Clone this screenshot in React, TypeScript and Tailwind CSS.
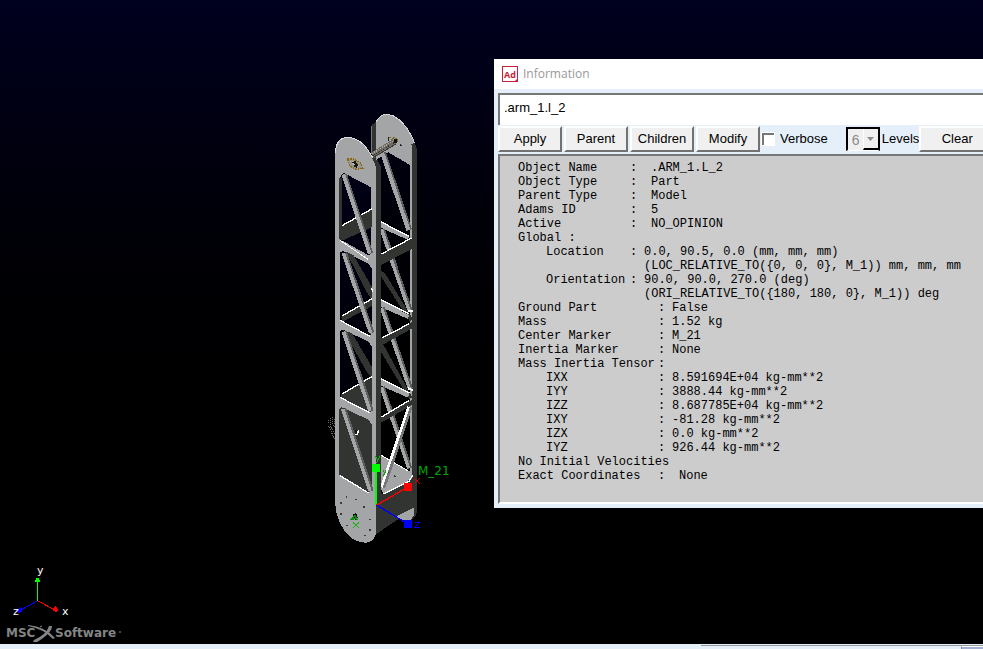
import React from "react";

const LIGHT = "#a3a5a6";
const DARK = "#323432";
const VOID = "url(#void)";
const EDGE = "#ffffff";
const SHADE = "#5c5d5c";

type Layout = "near" | "far";

type Entry = {
  label: string;
  value?: string;
  layout?: Layout;
  indent?: boolean;
  spaced?: boolean;
};

const report: Entry[] = [
  { label: "Object Name", value: ".ARM_1.L_2", layout: "near", spaced: true },
  { label: "Object Type", value: "Part", layout: "near", spaced: true },
  { label: "Parent Type", value: "Model", layout: "near", spaced: true },
  { label: "Adams ID", value: "5", layout: "near", spaced: true },
  { label: "Active", value: "NO_OPINION", layout: "near", spaced: true },
  { label: "Global :" },
  { label: "Location", value: "0.0, 90.5, 0.0 (mm, mm, mm)", layout: "near", indent: true },
  { label: "", value: "(LOC_RELATIVE_TO({0, 0, 0}, M_1)) mm, mm, mm", layout: "near" },
  { label: "Orientation", value: "90.0, 90.0, 270.0 (deg)", layout: "near", indent: true },
  { label: "", value: "(ORI_RELATIVE_TO({180, 180, 0}, M_1)) deg", layout: "near" },
  { label: "Ground Part", value: "False", layout: "far" },
  { label: "Mass", value: "1.52 kg", layout: "far" },
  { label: "Center Marker", value: "M_21", layout: "far" },
  { label: "Inertia Marker", value: "None", layout: "far" },
  { label: "Mass Inertia Tensor", value: "", layout: "far" },
  { label: "IXX", value: "8.591694E+04 kg-mm**2", layout: "far", indent: true },
  { label: "IYY", value: "3888.44 kg-mm**2", layout: "far", indent: true },
  { label: "IZZ", value: "8.687785E+04 kg-mm**2", layout: "far", indent: true },
  { label: "IXY", value: "-81.28 kg-mm**2", layout: "far", indent: true },
  { label: "IZX", value: "0.0 kg-mm**2", layout: "far", indent: true },
  { label: "IYZ", value: "926.44 kg-mm**2", layout: "far", indent: true },
  { label: "No Initial Velocities" },
  { label: "Exact Coordinates", value: "None", layout: "far", spaced: true },
];

function ReportRow({ label, value, layout, indent, spaced }: Entry) {
  if (!layout) {
    return (
      <div className="whitespace-pre">
        <dt>{label}</dt>
      </div>
    );
  }
  return (
    <div className="flex whitespace-pre">
      <dt className={`shrink-0 ${layout === "near" ? "w-[112px]" : "w-[140px]"} ${indent ? "pl-7" : ""}`}>{label}</dt>
      <dd className="flex">
        <span className={`shrink-0 ${spaced ? "w-[21px]" : "w-[14px]"}`}>{label ? ":" : ""}</span>
        <span>{value}</span>
      </dd>
    </div>
  );
}

type Seg = [number, number, number, number];

function Strut({ at, w = 12, fill = LIGHT, shade = SHADE }: { at: Seg; w?: number; fill?: string; shade?: string }) {
  const [x1, y1, x2, y2] = at;
  return (
    <g>
      <line x1={x1 + 4} y1={y1} x2={x2 + 4} y2={y2} stroke={shade} strokeWidth={w} />
      <line x1={x1} y1={y1} x2={x2} y2={y2} stroke={fill} strokeWidth={w - 3} />
    </g>
  );
}

function Rim({ at, w = 4 }: { at: Seg; w?: number }) {
  return <line x1={at[0]} y1={at[1]} x2={at[2]} y2={at[3]} stroke={EDGE} strokeWidth={w} />;
}

const boltHoles = [
  [80, 1176], [109, 1183], [64, 1194], [133, 1206], [64, 1227], [151, 1243],
  [82, 1261], [151, 1274], [136, 1291],
];

function ArmModel() {
  return (
    <svg
      className="absolute left-[320px] top-[105px] h-[450px] w-[140px]"
      viewBox="0 0 420 1350"
      shapeRendering="crispEdges"
      role="img"
      aria-label="Truss arm model"
    >
      <defs>
        <linearGradient id="void" gradientUnits="userSpaceOnUse" x1="0" y1="0" x2="0" y2="1230">
          <stop offset="0" stopColor="#000019" />
          <stop offset="1" stopColor="#000000" />
        </linearGradient>
      </defs>

      <path
        d="M24 944 L24 958 L40 995 L44 1005 M30 938 L32 962 L44 988 M36 936 L38 958 L46 970 M42 942 L44 958"
        fill="none"
        stroke="#6d6a64"
        strokeWidth="3"
        strokeDasharray="3 3"
      />

      {/* rear side plate */}
      <path d="M155 60 L168 50 L168 180 L155 160 Z" fill={DARK} />
      <path d="M155 62 L155 146" stroke="#77797a" strokeWidth="3" />
      <path d="M168 52 Q180 26 205 28 Q236 34 262 72 Q278 94 285 118 L277 122 L270 180 L205 142 L168 165 Z" fill={LIGHT} />
      <path d="M168 52 Q180 26 205 28 Q236 34 262 72 Q278 94 285 118" fill="none" stroke="#d6d7d7" strokeWidth="3" />
      <rect x="270" y="120" width="8" height="1000" fill={LIGHT} />
      <path d="M272 118 L284 114 L290 130 L290 1220 L277 1240 L277 124 Z" fill={DARK} />

      <Strut at={[186, 142, 265, 375]} w={15} />
      <Strut at={[184, 372, 224, 490]} w={13} />
      <path d="M182 352 L270 396 L262 404 L182 368 Z" fill={LIGHT} />
      <Rim at={[182, 350, 268, 395]} />
      <path d="M182 448 L277 398 L277 432 L182 480 Z" fill={DARK} />
      <Rim at={[184, 447, 275, 399]} />

      <Strut at={[214, 465, 268, 618]} w={13} />
      <path d="M180 495 L195 505 L277 640 L270 650 L180 510 Z" fill={DARK} />
      <path d="M182 586 L268 630 L264 642 L182 606 Z" fill={LIGHT} />
      <Rim at={[182, 584, 268, 626]} />
      <Rim at={[264, 618, 278, 618]} w={6} />
      <Strut at={[184, 608, 268, 850]} w={13} />
      <path d="M180 700 L277 650 L277 670 L190 718 L277 878 L268 882 L180 735 Z" fill={DARK} />
      <Rim at={[186, 699, 268, 656]} />
      <path d="M182 822 L268 866 L264 878 L182 842 Z" fill={LIGHT} />
      <Rim at={[182, 820, 268, 864]} />
      <Rim at={[264, 850, 278, 856]} w={6} />
      <Strut at={[184, 846, 266, 1090]} w={13} />
      <path d="M180 938 L277 884 L277 900 L180 955 Z" fill={DARK} />
      <Rim at={[185, 936, 268, 886]} />

      {/* base block */}
      <path d="M182 1050 L265 1098 L277 1100 L277 1122 L190 1167 L182 1150 Z" fill={LIGHT} />
      <Rim at={[182, 1050, 265, 1098]} w={3} />
      <line x1="272" y1="905" x2="190" y2="1148" stroke="#777978" strokeWidth="12" />
      <Rim at={[266, 905, 184, 1147]} w={8} />
      <path d="M168 1150 L190 1168 L277 1120 L290 1080 L290 1212 L245 1235 L168 1288 Z" fill={DARK} />
      <path d="M190 1167 L268 1128 L278 1110" fill="none" stroke={EDGE} strokeWidth="4" />
      <path d="M228 1235 L282 1208 L282 1230 Q278 1248 262 1250 Z" fill={LIGHT} />
      <path d="M282 1208 L290 1200 L290 1222 Q286 1240 270 1248 L282 1230 Z" fill={DARK} />
      <circle cx="224" cy="1114" r="3" fill={DARK} />
      <circle cx="206" cy="1102" r="2" fill={DARK} />

      {/* front side plate */}
      <path d="M155 160 L172 165 L182 185 L182 1270 L168 1288 L155 1200 Z" fill={DARK} />
      <path d="M46 145 Q48 98 82 97 Q125 100 150 145 L168 185 L168 1285 Q160 1313 138 1313 Q94 1313 66 1265 Q46 1230 46 1190 Z" fill={LIGHT} />
      <path d="M46 145 Q48 98 82 97 Q125 100 150 145 L160 160" fill="none" stroke="#dcdddd" strokeWidth="3" />

      <path d="M70 203 L153 247 L153 440 L148 452 L62 404 L58 220 Z" fill={VOID} />
      <path d="M58 220 L66 220 L66 408 L58 403 Z" fill={DARK} />
      <path d="M64 364 L157 312 L157 366 L64 408 Z" fill={DARK} />
      <Rim at={[66, 362, 157, 311]} />
      <Strut at={[70, 208, 149, 446]} w={14} />
      <Rim at={[60, 406, 144, 463]} w={3} />

      <path d="M70 438 L145 476 L157 494 L157 680 L150 692 L60 646 L60 442 Z" fill={VOID} />
      <path d="M78 440 L100 450 L157 548 L157 585 L140 562 Z" fill={DARK} />
      <path d="M64 636 L157 582 L157 603 L66 651 Z" fill={DARK} />
      <Rim at={[66, 633, 157, 581]} />
      <Rim at={[154, 548, 158, 560]} />
      <Strut at={[70, 444, 152, 684]} w={14} />
      <Rim at={[60, 646, 150, 694]} />

      <path d="M70 674 L145 710 L157 726 L157 910 L150 924 L60 876 L60 678 Z" fill={VOID} />
      <path d="M70 676 L96 684 L157 788 L157 822 L140 800 Z" fill={DARK} />
      <path d="M62 868 L157 815 L157 918 L148 922 L62 876 Z" fill={DARK} />
      <Rim at={[66, 867, 155, 815]} />
      <Strut at={[70, 680, 150, 918]} w={14} />
      <Rim at={[60, 877, 150, 924]} />

      <path d="M64 906 L145 944 L157 962 L157 1140 L148 1163 L58 1110 L58 912 Z" fill={DARK} />
      <Strut at={[68, 912, 150, 1158]} w={14} />
      <Rim at={[60, 1112, 146, 1164]} />
      <path d="M106 988 L112 988 L116 974" fill="none" stroke={EDGE} strokeWidth="5" />
      <rect x="105" y="975" width="7" height="8" fill="#111" />

      {/* pin joint */}
      <path d="M155 142 L218 103 L230 117 L160 160 Z" fill="#6f6c66" />
      <path d="M156 146 L218 108" stroke="#aaa59b" strokeWidth="4" strokeDasharray="4 3" />
      <path d="M158 152 L224 112" stroke="#2f2d2a" strokeWidth="3" strokeDasharray="3 3" />
      <path d="M160 157 L228 117" stroke="#3b3935" strokeWidth="3" />
      <path d="M204 97 L212 96 M214 104 L222 98 L230 100 L234 110" fill="none" stroke="#80682a" strokeWidth="3" strokeDasharray="5 2" />
      <path d="M220 101 L230 103 L232 113 L224 116 Z" fill="#131312" />
      <path d="M240 118 L246 123 M204 98 L207 106" stroke="#222" strokeWidth="4" />

      <path d="M82 162 L102 162 L122 174 L129 190 L108 193 L90 184 Z" fill="#979691" />
      <path d="M82 162 L102 162 L122 174 L129 190 L108 193 L90 184 Z" fill="none" stroke="#8a6a10" strokeWidth="4" strokeDasharray="5 3" />
      <path d="M90 168 L100 168 L118 184" fill="none" stroke="#d8bf62" strokeWidth="3" strokeDasharray="3 4" />
      <path d="M96 172 L106 168 L114 180 L110 188 L102 184 Z" fill="#161613" />
      <path d="M98 174 L104 181" stroke="#b8b8b5" strokeWidth="3" />

      {boltHoles.map(([x, y], i) => (
        <path key={i} d={`M${x - 3} ${y - 2}h5v5h-5z`} fill="#3a3b3a" />
      ))}
      <path d="M98 1228 L108 1225 L113 1236 L110 1246 L100 1242 Z" fill="#101010" />
      <path d="M90 1245 L105 1232 L112 1245 M90 1243 L112 1240" stroke="#0a8f0a" strokeWidth="4" fill="none" />
      <path d="M100 1253 L116 1268 M116 1253 L100 1268" stroke="#12b512" strokeWidth="3" />

      {/* marker triad */}
      <line x1="168" y1="1085" x2="168" y2="1200" stroke="#00ff00" strokeWidth="4" />
      <line x1="170" y1="1200" x2="262" y2="1147" stroke="#ff0000" strokeWidth="4" />
      <line x1="170" y1="1200" x2="262" y2="1256" stroke="#0000ff" strokeWidth="4" />
      <rect x="156" y="1077" width="24" height="24" fill="#00ff00" />
      <rect x="252" y="1134" width="24" height="24" fill="#ff0000" />
      <rect x="252" y="1245" width="24" height="24" fill="#0000ff" />
      <path d="M284 1120 L298 1136 M298 1120 L284 1136" stroke="#d00000" strokeWidth="3" />
      <path d="M285 1253 L298 1253 L286 1266 L299 1266" stroke="#0000ff" strokeWidth="3" fill="none" />
      <path d="M166 1054 L173 1066 M180 1054 L170 1074" stroke="#12b512" strokeWidth="3" />
      <path d="M188 1094 L193 1104 M199 1094 L190 1113" stroke="#12a012" strokeWidth="3" />
      <text x="294" y="1110" fontSize="36" fill="#00a800" className="font-['DejaVu_Sans',sans-serif]">
        M_21
      </text>
    </svg>
  );
}

function ViewTriad() {
  return (
    <svg className="absolute bottom-[26px] left-[8px] h-[56px] w-[64px]" viewBox="0 0 64 56" role="img" aria-label="View axes">
      <g shapeRendering="crispEdges">
        <path d="M29 39V19" stroke="#00ff00" strokeWidth="1" transform="translate(0.5 0)" />
        <path d="M27 20h5v-2h-1v-2h-3v2h-1z" fill="#00ff00" />
        <path d="M30 39L47 48" stroke="#ff0000" strokeWidth="1" />
        <path d="M45 46l3-2 2 4-1 2-4-1z" fill="#ff0000" />
        <path d="M29 39L13 48" stroke="#0000ff" strokeWidth="1" />
        <path d="M9 49l3-4 3 2-1 3-4 1z" fill="#0000ff" />
      </g>
      <g fill="#ffffff" fontSize="11" className="font-['DejaVu_Sans',sans-serif]">
        <text x="29" y="12">y</text>
        <text x="54" y="53">x</text>
        <text x="5" y="53">z</text>
      </g>
    </svg>
  );
}

function VendorLogo() {
  return (
    <svg className="absolute bottom-0 left-[6px] h-[20px] w-[118px]" viewBox="0 0 118 20" role="img" aria-label="MSC Software">
      <g fill="#858585" fontSize="12" fontWeight="700" className="font-['DejaVu_Sans',sans-serif]">
        <text x="0" y="13">MSC</text>
        <text x="49" y="13">Software</text>
      </g>
      <path d="M22 1 Q40 3 49 14 L47 15 Q38 5 22 2 Z" fill="#858585" />
      <path d="M43 2 L46 2 Q46 9 31 18 L27 18 L28 16 Q41 10 43 2 Z" fill="#858585" />
      <path d="M34 3l2-1M113 8h2" stroke="#858585" />
    </svg>
  );
}

function PushButton({ children, wide = false }: { children: React.ReactNode; wide?: boolean }) {
  return (
    <button
      type="button"
      className={`h-[26px] shrink-0 border-2 border-t-white border-l-white border-r-[#727272] border-b-[#727272] bg-[#f0f0f0] text-center leading-[22px] ${
        wide ? "-ml-[2px] w-[76px]" : "w-[64px]"
      }`}
    >
      {children}
    </button>
  );
}

function InformationWindow() {
  return (
    <section
      aria-label="Information"
      className="absolute left-[494px] right-0 top-[59px] overflow-hidden bg-[#e5eff9] pb-1 font-['Liberation_Sans',Arial,sans-serif] text-[13px] text-black"
    >
      <header className="flex h-[30px] items-center gap-[5px] bg-white pl-2">
        <svg className="h-4 w-4" viewBox="0 0 16 16" aria-hidden="true">
          <rect x="0.5" y="0.5" width="15" height="15" fill="#fff" stroke="#c8203c" />
          <path d="M13 15l2-2v2z" fill="#c8203c" />
          <text x="2" y="12" fontSize="9" fontWeight="700" fill="#c8203c" className="font-['Open_Sans',sans-serif]">
            Ad
          </text>
        </svg>
        <h1 className="font-['Open_Sans',sans-serif] text-[12px] leading-4 text-[#999999]">Information</h1>
      </header>

      <div className="pl-1 pt-1">
        <input
          aria-label="Object name"
          defaultValue=".arm_1.l_2"
          className="block h-[32px] w-full border-l-2 border-t-2 border-[#777777] bg-white pb-[6px] pl-1 outline-none"
        />
        <div className="flex items-center gap-[2px] overflow-hidden pb-[2px] pt-px">
          <PushButton>Apply</PushButton>
          <PushButton>Parent</PushButton>
          <PushButton>Children</PushButton>
          <PushButton>Modify</PushButton>
          <label className="flex shrink-0 items-center gap-[6px]">
            <input
              type="checkbox"
              className="h-3 w-3 appearance-none border-l-2 border-t-2 border-[#777777] bg-white outline outline-1 outline-white"
            />
            Verbose
          </label>
          <div className="ml-4 flex shrink-0 items-center">
            <div className="relative h-6 w-[34px] border-l-2 border-t-2 border-b border-r-2 border-black border-b-white bg-[#f0f0f0]">
              <select
                id="levels"
                disabled
                defaultValue="6"
                className="h-full w-full appearance-none bg-transparent pl-1 text-[14px] leading-5 text-[#8a8a8a] opacity-100"
              >
                <option>6</option>
              </select>
              <span className="pointer-events-none absolute inset-y-0 right-0 flex w-[15px] items-center justify-center border-b-2 border-l border-b-black border-l-white bg-[#f0f0f0]">
                <svg className="h-1 w-[7px]" viewBox="0 0 7 4" aria-hidden="true">
                  <path d="M0 0h7L3.500 4z" fill="#8c8c8c" />
                </svg>
              </span>
            </div>
            <label htmlFor="levels" className="pl-[2px]">
              Levels
            </label>
          </div>
          <PushButton wide>Clear</PushButton>
        </div>
        <dl className="overflow-hidden border-b-2 border-l-2 border-t-2 border-[#777777] border-b-white bg-[#cccccc] pb-[19px] pl-[18px] pt-[5px] font-['Liberation_Mono','Courier_New',monospace] text-[12px] leading-[14px]">
          {report.map((entry, i) => (
            <ReportRow key={i} {...entry} />
          ))}
        </dl>
      </div>
    </section>
  );
}

export default function App() {
  return (
    <div className="flex h-screen flex-col overflow-hidden bg-black">
      <main className="relative min-h-0 flex-1 overflow-hidden bg-linear-to-b from-[#00001f] to-black to-80%">
        <ArmModel />
        <ViewTriad />
        <VendorLogo />
        <InformationWindow />
      </main>
      <footer className="flex h-[5px] shrink-0 justify-end bg-[#e5eff9]">
        <div className="mt-px flex w-[282px] justify-end border-t border-[#999999]">
          <div className="w-[22px] border-l border-t border-[#7f8cae] border-t-white bg-[#a3b1d2]" />
        </div>
      </footer>
    </div>
  );
}
